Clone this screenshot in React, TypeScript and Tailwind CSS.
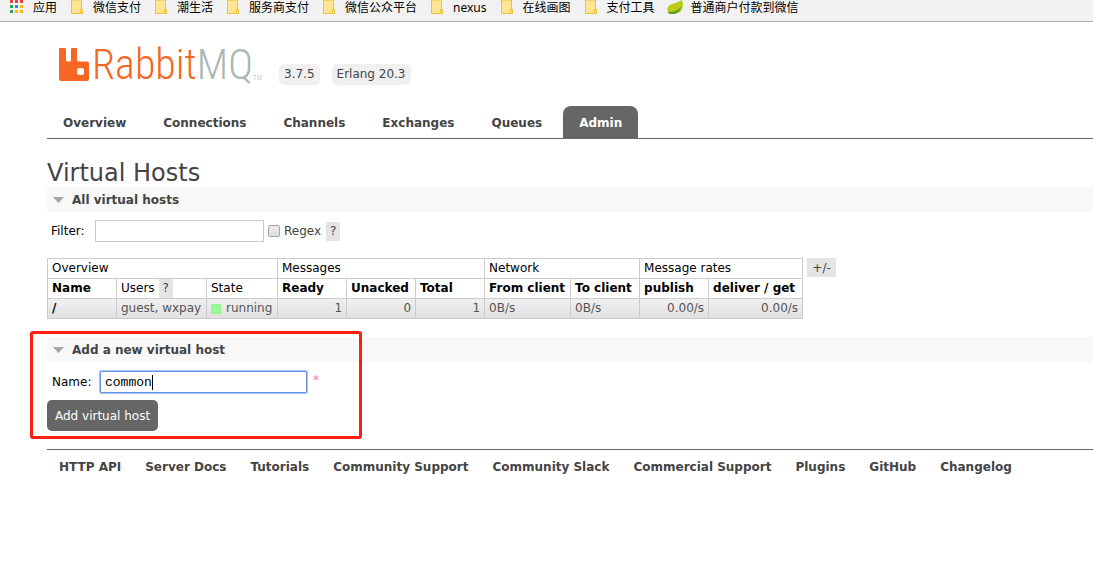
import React, { useState } from 'react';

const bookmarks = ['微信支付', '潮生活', '服务商支付', '微信公众平台', 'nexus', '在线画图', '支付工具'];
const tabs = ['Overview', 'Connections', 'Channels', 'Exchanges', 'Queues', 'Admin'];
const footerLinks = [
  'HTTP API',
  'Server Docs',
  'Tutorials',
  'Community Support',
  'Community Slack',
  'Commercial Support',
  'Plugins',
  'GitHub',
  'Changelog',
];

function AppsIcon() {
  const colors = ['#f23b34', '#f23b34', '#f23b34', '#2f9e5b', '#1e88f5', '#f9b400', '#2f9e5b', '#f9b400', '#f9b400'];
  return (
    <svg width="13" height="14" viewBox="0 0 13 14" className="shrink-0" aria-hidden="true">
      {colors.map((c, i) => (
        <rect key={i} x={(i % 3) * 5} y={Math.floor(i / 3) * 5} width="3" height="3" fill={c} />
      ))}
    </svg>
  );
}

function FolderIcon() {
  return (
    <svg width="12" height="14" viewBox="0 0 12 14" className="shrink-0" aria-hidden="true">
      <path d="M.5 0V13.5H11.5V9.5H10.500V0Z" fill="#ffe593" stroke="#ecc23d" />
      <path d="M9.500 13.500V9.500H11.500V13.500Z" fill="#ffe593" stroke="#ecc23d" />
    </svg>
  );
}

function LeafIcon() {
  return (
    <svg width="17" height="15" viewBox="0 0 17 15" className="shrink-0" aria-hidden="true">
      <path d="M15 0C17 5 16.500 14 6 14C2 14 0 12 .5 8.500C1.500 3 9 4 15 0Z" fill="#bccb1c" />
      <path d="M1 12C7 12 11 11 14.500 6C13 12 9 15 4 13.800C2.500 14.500 1.500 13.500 1 12Z" fill="#5f9a2d" />
    </svg>
  );
}

function SectionTitle({ children }: { children: React.ReactNode }) {
  return (
    <h2 className="flex h-[25px] items-center bg-[#f8f8f8] pl-[6px] text-[12px] font-bold text-[#444]">
      <svg width="11" height="6" viewBox="0 0 11 6" className="mr-2" aria-hidden="true">
        <path d="M0 0H11L5.500 6Z" fill="#a5a5a5" />
      </svg>
      {children}
    </h2>
  );
}

const cell = 'h-5 border border-[#ccc] px-1 py-0 text-left leading-[19px] whitespace-nowrap';

export default function App() {
  const [filter, setFilter] = useState('');
  const [name, setName] = useState('common');

  return (
    <div className="overflow-x-hidden bg-white pb-8 font-['DejaVu_Sans','Noto_Sans_CJK_SC',sans-serif] text-[12px] leading-4 text-[#444]">
      <nav
        aria-label="Bookmarks"
        className="flex h-[22px] items-start overflow-hidden border-b border-[#b0b0b0] bg-[#f2f2f2] pl-[10px] font-['Noto_Sans','Noto_Sans_CJK_SC',sans-serif] whitespace-nowrap text-black"
      >
        <a href="#apps" className="mr-[14px] flex gap-[10px]">
          <AppsIcon />
          应用
        </a>
        {bookmarks.map((b) => (
          <a key={b} href="#bookmark" className="mr-[14px] flex gap-[10px]">
            <FolderIcon />
            {b}
          </a>
        ))}
        <a href="#bookmark" className="-ml-[2px] flex gap-[7px]">
          <LeafIcon />
          普通商户付款到微信
        </a>
      </nav>

      <div className="pl-[47px]">
        <header>
          <div className="flex pt-5 pl-3">
            <a
              href="#home"
              className="flex h-11 w-[208px] items-start pt-[6px] font-['Roboto_Condensed',Roboto,sans-serif] text-[42px] leading-[34px] font-light"
            >
              <svg width="30" height="33" viewBox="0 0 30 33" className="shrink-0" aria-hidden="true">
                <path
                  d="M1 0H6Q7 0 7 1V12Q7 13.500 8.500 13.500H10.500Q12 13.500 12 12V1Q12 0 13 0H17Q18 0 18 1V12Q18 13.500 19.500 13.500H28Q30 13.500 30 15.500V31Q30 33 28 33H2Q0 33 0 31V1Q0 0 1 0Z"
                  fill="#f56723"
                />
                <rect x="18" y="20" width="7" height="7" rx="2" fill="#fff" />
              </svg>
              <span className="ml-[3px] text-[#f56723]">Rabbit</span>
              <span className="text-[#a9b8b2]">MQ</span>
              <span className="self-end text-[7px] leading-4 text-[#a9b8b2]">TM</span>
            </a>
            <div className="ml-3 flex gap-3 pt-[22px] text-[12px]">
              <span className="h-[21px] rounded-[5px] bg-[#f0f0f0] px-[5px] leading-[21px]">3.7.5</span>
              <span className="h-[21px] rounded-[5px] bg-[#f0f0f0] px-[5px] leading-[21px]">Erlang 20.3</span>
            </div>
          </div>
          <nav aria-label="Main" className="mt-5 flex gap-[5px] border-b border-[#666] font-bold">
            {tabs.map((t) => (
              <a
                key={t}
                href="#tab"
                className={
                  t === 'Admin'
                    ? 'h-8 rounded-t-[8px] bg-[#666] px-4 leading-[34px] text-white'
                    : 'h-8 px-4 leading-[34px]'
                }
              >
                {t}
              </a>
            ))}
          </nav>
        </header>

        <main>
          <h1 className="pt-[20px] text-[24px] leading-[28px]">
            Virtual Hosts
          </h1>
          <section>
            <SectionTitle>All virtual hosts</SectionTitle>
            <div className="mt-2 flex h-[22px] items-center pl-1">
              <label htmlFor="filter" className="w-11 text-black">
                Filter:
              </label>
              <input
                id="filter"
                value={filter}
                onChange={(e) => setFilter(e.target.value)}
                className="h-[22px] w-[169px] border border-[#ccc] px-1 outline-none"
              />
              <input
                id="regex"
                type="checkbox"
                className="ml-1 size-3 appearance-none rounded-[2px] border border-[#a5a5a5] bg-linear-to-b from-[#eee] to-[#ddd]"
              />
              <label htmlFor="regex" className="ml-1">
                Regex
              </label>
              <button type="button" className="ml-[5px] h-[19px] w-[14px] bg-[#e4e4e4]">
                ?
              </button>
            </div>

            <div className="mt-4 flex items-start gap-1">
              <table className="w-[756px] table-fixed border-collapse text-black">
                <colgroup>
                  <col className="w-[69px]" />
                  <col className="w-[90px]" />
                  <col className="w-[71px]" />
                  <col className="w-[69px]" />
                  <col className="w-[69px]" />
                  <col className="w-[69px]" />
                  <col className="w-[86px]" />
                  <col className="w-[69px]" />
                  <col className="w-[69px]" />
                  <col className="w-[94px]" />
                </colgroup>
                <thead>
                  <tr>
                    <th colSpan={3} className={`${cell} font-normal`}>Overview</th>
                    <th colSpan={3} className={`${cell} font-normal`}>Messages</th>
                    <th colSpan={2} className={`${cell} font-normal`}>Network</th>
                    <th colSpan={2} className={`${cell} font-normal`}>Message rates</th>
                  </tr>
                  <tr>
                    <th className={cell}>Name</th>
                    <th className={`${cell} font-normal`}>
                      <span className="flex gap-1">
                        Users
                        <button type="button" className="h-[19px] w-[14px] bg-[#e4e4e4] text-[#444]">
                          ?
                        </button>
                      </span>
                    </th>
                    <th className={`${cell} font-normal`}>State</th>
                    <th className={cell}>Ready</th>
                    <th className={cell}>Unacked</th>
                    <th className={cell}>Total</th>
                    <th className={cell}>From client</th>
                    <th className={cell}>To client</th>
                    <th className={cell}>publish</th>
                    <th className={cell}>deliver / get</th>
                  </tr>
                </thead>
                <tbody>
                  <tr className="bg-linear-to-b from-[#f0f0f0] to-[#e0e0e0] text-[#555]">
                    <td className={cell}>
                      <a href="#vhost" className="font-bold text-black">/</a>
                    </td>
                    <td className={cell}>guest, wxpay</td>
                    <td className={cell}>
                      <span className="flex items-center gap-[5px]">
                        <span className="size-[10px] bg-[#98f898]" />
                        running
                      </span>
                    </td>
                    <td className={cell}><div className="text-right">1</div></td>
                    <td className={cell}><div className="text-right">0</div></td>
                    <td className={cell}><div className="text-right">1</div></td>
                    <td className={cell}>0B/s</td>
                    <td className={cell}>0B/s</td>
                    <td className={cell}><div className="text-right">0.00/s</div></td>
                    <td className={cell}><div className="text-right">0.00/s</div></td>
                  </tr>
                </tbody>
              </table>
              <button type="button" className="h-[19px] w-[29px] bg-[#e4e4e4]">
                +/-
              </button>
            </div>
          </section>

          <section className="relative mt-[18px]">
            <SectionTitle>Add a new virtual host</SectionTitle>
            <form onSubmit={(e) => e.preventDefault()}>
              <div className="mt-2 flex h-6 items-center pl-[5px]">
                <label htmlFor="vhost-name" className="w-12 text-black">
                  Name:
                </label>
                <div className="relative">
                  <input
                    id="vhost-name"
                    value={name}
                    onChange={(e) => setName(e.target.value)}
                    className="block h-[22px] w-[207px] rounded-[1px] border border-[#6a94e0] px-1 font-['Liberation_Mono',monospace] text-[13px] text-black caret-transparent ring-1 ring-[#a4c3f5] outline-none"
                  />
                  <span className="absolute top-1 left-[52px] h-[15px] w-px bg-black" />
                </div>
                <span className="ml-[6px] pb-1 text-[#ff7b8b]">*</span>
              </div>
              <button type="submit" className="mt-[6px] h-[31px] rounded-[5px] bg-[#666] px-2 text-white">
                Add virtual host
              </button>
            </form>
            <div className="pointer-events-none absolute -top-[6px] -left-[17px] h-[108px] w-[332px] rounded-[3px] border-3 border-[#ff1f10]" />
          </section>
        </main>

        <footer className="mt-[18px] flex gap-6 border-t border-[#666] pt-[9px] pl-3 font-bold whitespace-nowrap">
          {footerLinks.map((l) => (
            <a key={l} href="#link">
              {l}
            </a>
          ))}
        </footer>
      </div>
    </div>
  );
}
